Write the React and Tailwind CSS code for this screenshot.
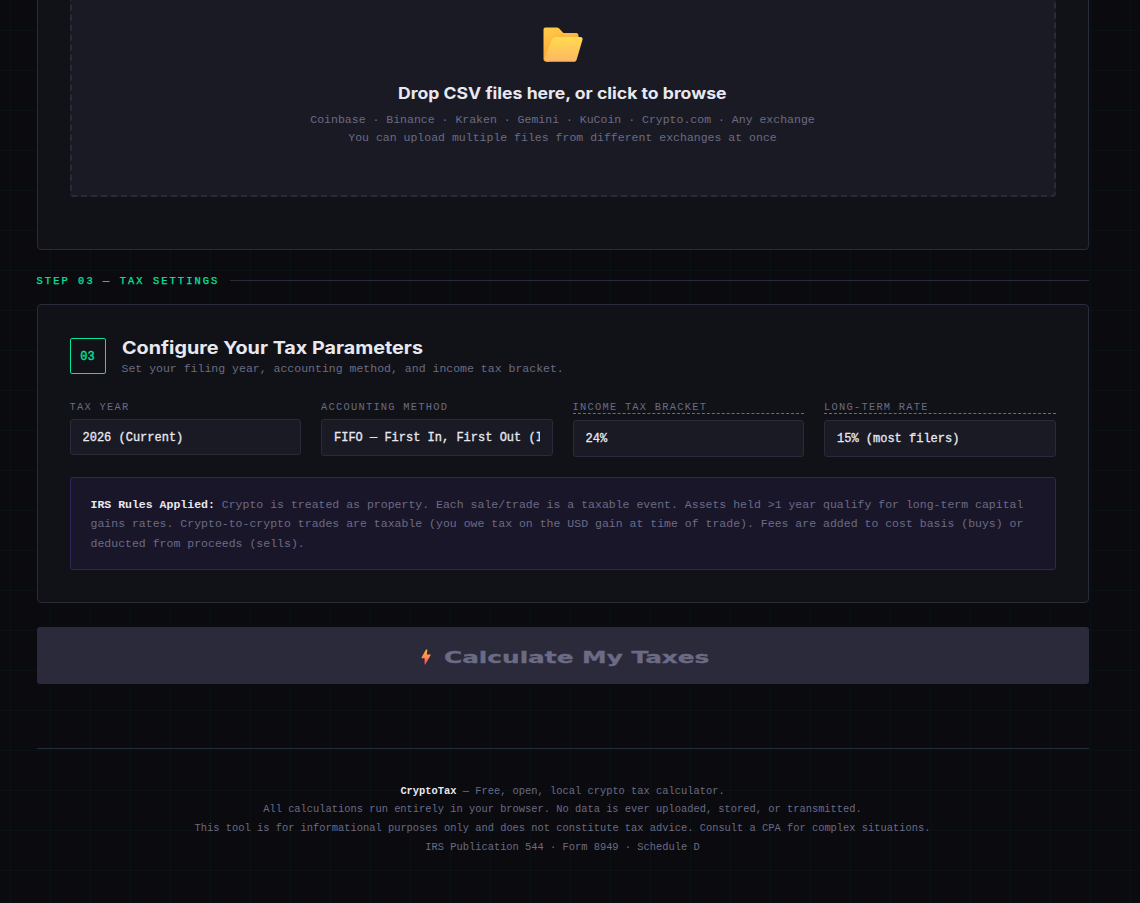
import React, { useState } from 'react';

const settings = [
  {
    name: 'taxYear',
    label: 'Tax Year',
    value: '2026 (Current)',
    boxClass: 'h-9',
  },
  {
    name: 'method',
    label: 'Accounting Method',
    value: 'FIFO — First In, First Out (IRS Default)',
    boxClass: 'h-[37px]',
  },
  {
    name: 'bracket',
    label: 'Income Tax Bracket',
    value: '24%',
    hint: true,
    boxClass: 'h-[37px]',
  },
  {
    name: 'longTerm',
    label: 'Long-Term Rate',
    value: '15% (most filers)',
    hint: true,
    boxClass: 'h-[37px]',
  },
];

const FolderIcon = () => (
  <svg width="40" height="36" viewBox="0 0 40 36" className="ml-px block">
    <defs>
      <linearGradient id="folderBack" x1="0" y1="0" x2="0.4" y2="1">
        <stop offset="0" stopColor="#ffcf4a" />
        <stop offset="1" stopColor="#ff9c35" />
      </linearGradient>
      <linearGradient id="folderFront" x1="0" y1="0" x2="0" y2="1">
        <stop offset="0" stopColor="#ffdb50" />
        <stop offset="1" stopColor="#ffb662" />
      </linearGradient>
    </defs>
    <path
      d="M2.5 0.5H13.6C14.6 0.5 15.5 0.9 16.2 1.6L20.4 6H33.2C34.6 6 35.5 7 35.5 8.4V20L6 34.5H3C1.4 34.5 0.5 33.4 0.5 32V2.5C0.5 1.4 1.4 0.5 2.5 0.5Z"
      fill="url(#folderBack)"
    />
    <path
      d="M13 10H37.3C39.2 10 40 11.2 39.5 12.8L33.7 32.4C33.3 33.9 32.3 34.8 30.8 34.8H4.2C2.2 34.8 0.9 33.3 1.5 31.6L8.7 13C9.4 11.1 10.9 10 13 10Z"
      fill="url(#folderFront)"
    />
  </svg>
);

const BoltIcon = () => (
  <svg width="10" height="16" viewBox="0 0 10 16" className="mt-0.5 block">
    <defs>
      <linearGradient id="bolt" x1="0" y1="0" x2="0" y2="1">
        <stop offset="0" stopColor="#ffb04a" />
        <stop offset="0.5" stopColor="#ff8a4c" />
        <stop offset="1" stopColor="#f0484c" />
      </linearGradient>
    </defs>
    <path
      d="M5 0.4H6.3L5.9 5.6H9.3C9.7 5.6 9.8 5.9 9.6 6.2L4.3 15.4C4.1 15.7 3.6 15.6 3.6 15.2V9.2H0.9C0.5 9.2 0.3 8.9 0.5 8.5Z"
      fill="url(#bolt)"
    />
  </svg>
);

const SettingField = ({ label, value, hint, boxClass }) => (
  <div className="flex flex-col">
    <div
      className={`mb-1.5 h-[13px] pt-px text-[10.4px] leading-[13px] tracking-[0.12em] text-[#6b6b85] uppercase ${
        hint ? 'box-content h-3! border-b border-dashed border-[#6b6b85]' : ''
      }`}
    >
      {label}
    </div>
    <button
      type="button"
      className={`flex items-center rounded-[3px] border border-[#2a2a3a] bg-[#1a1a24] px-3 pt-px text-left text-xs text-[#e8e8f0] ${boxClass}`}
    >
      <span className="block w-full overflow-hidden whitespace-nowrap [-webkit-text-stroke:0.3px_#e8e8f0]">
        {value}
      </span>
    </button>
  </div>
);

const App = () => {
  const [fields] = useState(settings);

  return (
    <div className="h-[903px] w-[1140px] overflow-hidden bg-[#0a0a0f] bg-[linear-gradient(rgba(0,229,160,0.03)_1px,transparent_1px),linear-gradient(90deg,rgba(0,229,160,0.03)_1px,transparent_1px)] bg-[size:40px_40px] bg-[position:10px_30px] font-['Liberation_Mono',monospace] text-[#e8e8f0]">
      <div className="ml-[36.5px] w-[1052px]">
        {/* Upload card */}
        <div className="-mt-20 h-[330px] rounded border border-[#2a2a3a] bg-[#111217] px-8 pt-[50px]">
          <div className="flex h-[226px] flex-col items-center rounded border-2 border-dashed border-[#2a2a3a] bg-[#1a1a24] pt-[54px]">
            <FolderIcon />
            <div className="mt-[18px] flex h-6 items-center justify-center font-['Inter',sans-serif] text-[16px] font-bold">
              <span className="scale-x-[1.1] whitespace-nowrap">
                Drop CSV files here, or click to browse
              </span>
            </div>
            <p className="mt-1.5 text-center text-[11.52px] leading-[18.4px] text-[#6b6b85]">
              Coinbase · Binance · Kraken · Gemini · KuCoin · Crypto.com · Any exchange
              <br />
              You can upload multiple files from different exchanges at once
            </p>
          </div>
        </div>

        {/* Section label */}
        <div className="mt-5 flex h-[21px] items-center gap-[11px]">
          <span className="pt-[3px] text-[10.4px] tracking-[0.2em] text-[#00e5a0] uppercase [-webkit-text-stroke:0.25px_#00e5a0]">
            Step 03 — Tax Settings
          </span>
          <div className="h-px flex-1 bg-[#2a2a3a]"></div>
        </div>

        {/* Settings card */}
        <div className="mt-[13px] h-[299px] rounded border border-[#2a2a3a] bg-[#111217] px-8 pt-[33px]">
          <div className="flex h-9 gap-4">
            <div className="flex h-9 w-9 items-center justify-center rounded-[2px] border border-[#00e5a0] pt-px text-xs text-[#00e5a0] [-webkit-text-stroke:0.35px_#00e5a0]">
              03
            </div>
            <div>
              <h2 className="h-[22px] origin-left scale-x-[1.123] font-['Inter',sans-serif] text-[17.6px] leading-[20px] font-bold whitespace-nowrap">
                Configure Your Tax Parameters
              </h2>
              <p className="text-[11.52px] leading-[18px] text-[#6b6b85]">
                Set your filing year, accounting method, and income tax bracket.
              </p>
            </div>
          </div>

          <div className="mt-[26px] grid h-[57px] grid-cols-4 items-start gap-5">
            {fields.map((field) => (
              <SettingField key={field.name} {...field} />
            ))}
          </div>

          <div className="mt-5 h-[93px] rounded-[3px] border border-[#2f2759] bg-[#1a1629] px-5 pt-[16.5px] text-[11.52px] leading-[19.58px] text-[#6b6b85]">
            <strong className="text-[#e8e8f0]">IRS Rules Applied:</strong> Crypto is treated as
            property. Each sale/trade is a taxable event. Assets held &gt;1 year qualify for
            long-term capital gains rates. Crypto-to-crypto trades are taxable (you owe tax on the
            USD gain at time of trade). Fees are added to cost basis (buys) or deducted from
            proceeds (sells).
          </div>
        </div>

        <button
          type="button"
          disabled
          className="mt-6 flex h-[57px] w-full items-center rounded-[3px] bg-[#2a2a3a] pl-[384px] text-[#6b6b85]"
        >
          <BoltIcon />
          <span className="mt-[5px] ml-[13px] origin-left scale-x-[1.65] font-['DejaVu_Sans',sans-serif] text-[15px] font-bold whitespace-nowrap [-webkit-text-stroke:0.3px_#6b6b85]">
            Calculate My Taxes
          </span>
        </button>

        <footer className="mt-16 border-t border-[#2a2a3a] pt-[32.5px] text-center text-[10.4px] leading-[18.72px] text-[#6b6b85]">
          <p>
            <strong className="text-[#e8e8f0]">CryptoTax</strong> — Free, open, local crypto tax
            calculator.
          </p>
          <p>
            All calculations run entirely in your browser. No data is ever uploaded, stored, or
            transmitted.
          </p>
          <p>
            This tool is for informational purposes only and does not constitute tax advice. Consult
            a CPA for complex situations.
          </p>
          <p>IRS Publication 544 · Form 8949 · Schedule D</p>
        </footer>
      </div>
    </div>
  );
};

export default App;
